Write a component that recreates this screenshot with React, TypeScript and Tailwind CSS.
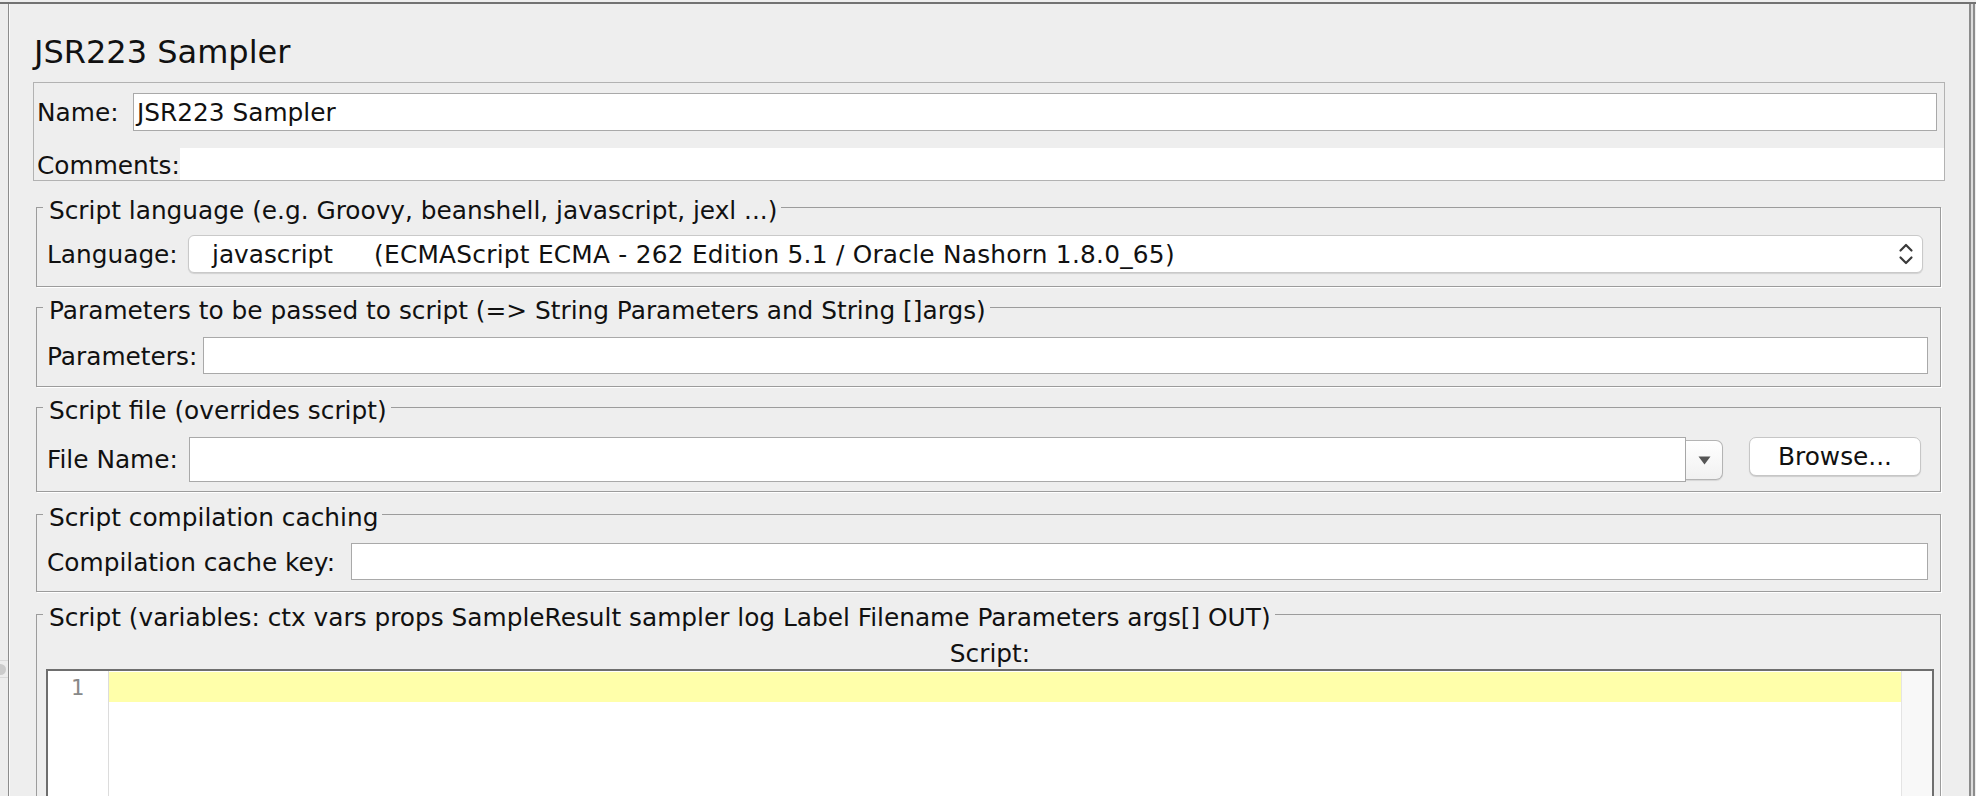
import React from "react";

function Legend({ children }: { children: React.ReactNode }) {
  return (
    <legend className="-ml-[4px] h-[36px] pt-[8px] pl-[6px] pr-[4px] text-[24.8px] leading-[28px] whitespace-pre overflow-hidden">
      {children}
    </legend>
  );
}

export default function App() {
  return (
    <div className="w-[1976px] h-[796px] overflow-hidden bg-[#eeeeee] pt-[2px] font-['DejaVu_Sans',sans-serif] text-[#111111]">
      <div className="flex h-full border-t-2 border-[#727272]">
        {/* left strip with splitter handle */}
        <div className="w-[8px] shrink-0 bg-[#ededed] flex flex-col">
          <div className="mt-[656px] h-[18px] border-y border-[#dadada] flex items-center">
            <div className="-ml-[5px] w-[11px] h-[11px] rounded-full bg-[#cbcbcb]" />
          </div>
        </div>

        {/* main panel */}
        <div className="flex-1 flex flex-col border-l border-r-2 border-[#8c8c8c] shadow-[inset_1px_0_0_#fafafa] pl-[24px] pr-[24px] pt-[28px]">
          <div className="h-[40px] leading-[40px] text-[32px] pl-[1px]">JSR223 Sampler</div>

          {/* Name / comments box */}
          <div className="mt-[10px] border border-[#b2b2b2] pt-[10px] text-[24.8px] leading-[28px]">
            <div className="flex items-center h-[38px] pl-[3px] pr-[7px]">
              <div className="w-[96px] shrink-0 pt-[2px]">Name:</div>
              <div className="flex-1 h-[38px] bg-white border border-[#a9a9a9] flex items-center px-[3px] pt-[2px]">
                JSR223 Sampler
              </div>
            </div>
            <div className="flex items-center h-[32px] mt-[17px] pl-[3px]">
              <div className="w-[143px] shrink-0 pt-[4px]">Comments:</div>
              <div className="flex-1 h-[32px] bg-white" />
            </div>
          </div>

          {/* Script language */}
          <fieldset className="mt-[8px] ml-[3px] mr-[4px] border border-[#9c9c9c] shadow-[1px_1px_0_#ffffff] pl-[10px] pr-[12px] pb-[13px] text-[24.8px] leading-[28px]">
            <Legend>Script language (e.g. Groovy, beanshell, javascript, jexl ...)</Legend>
            <div className="flex items-center mt-[10px] h-[38px]">
              <div className="w-[141px] shrink-0 pt-[2px]">Language:</div>
              <div className="flex-1 mr-[5px] h-[38px] rounded-[6px] bg-white border border-[#c9c9c9] shadow-[0_1px_1px_rgba(0,0,0,0.12)] flex items-center pl-[23px] pr-[8px]">
                <span className="pt-[2px]">javascript</span>
                <span className="ml-[41px] pt-[2px] tracking-[0.25px]">(ECMAScript ECMA - 262 Edition 5.1 / Oracle Nashorn 1.8.0_65)</span>
                <span className="flex-1" />
                <svg width="16" height="24" viewBox="0 0 16 24" className="shrink-0">
                  <path d="M2.5 8.5 L8 3 L13.5 8.5" fill="none" stroke="#3a3a3a" strokeWidth="2.2" strokeLinecap="round" strokeLinejoin="round" />
                  <path d="M2.5 15.5 L8 21 L13.5 15.5" fill="none" stroke="#3a3a3a" strokeWidth="2.2" strokeLinecap="round" strokeLinejoin="round" />
                </svg>
              </div>
            </div>
          </fieldset>

          {/* Parameters */}
          <fieldset className="mt-[2px] ml-[3px] mr-[4px] border border-[#9c9c9c] shadow-[1px_1px_0_#ffffff] pl-[10px] pr-[12px] pb-[12px] text-[24.8px] leading-[28px]">
            <Legend>Parameters to be passed to script (=&gt; String Parameters and String []args)</Legend>
            <div className="flex items-center mt-[12px] h-[37px]">
              <div className="w-[156px] shrink-0 pt-[3px]">Parameters:</div>
              <div className="flex-1 h-[37px] bg-white border border-[#a9a9a9]" />
            </div>
          </fieldset>

          {/* Script file */}
          <fieldset className="mt-[2px] ml-[3px] mr-[4px] border border-[#9c9c9c] shadow-[1px_1px_0_#ffffff] pl-[10px] pr-[12px] pb-[9px] text-[24.8px] leading-[28px]">
            <Legend>Script file (overrides script)</Legend>
            <div className="flex items-start mt-[12px] h-[45px]">
              <div className="w-[142px] shrink-0 h-[45px] flex items-center pt-[1px]">File Name:</div>
              <div className="flex-1 h-[45px] bg-white border border-[#a9a9a9]" />
              <div className="mt-[3px] w-[37px] h-[40px] shrink-0 rounded-r-[7px] border border-l-0 border-[#b4b4b4] bg-[linear-gradient(#ffffff,#f1f1f1)] shadow-[0_1px_1px_rgba(0,0,0,0.1)] flex items-center justify-center">
                <svg width="13" height="9" viewBox="0 0 13 9">
                  <path d="M0.5 0.5 L12.5 0.5 L6.5 8.5 Z" fill="#555555" />
                </svg>
              </div>
              <div className="ml-[26px] mr-[7px] w-[172px] h-[39px] shrink-0 rounded-[7px] bg-white border border-[#c6c6c6] shadow-[0_1px_1px_rgba(0,0,0,0.14)] flex items-center justify-center pt-[1px]">
                Browse...
              </div>
            </div>
          </fieldset>

          {/* Compilation caching */}
          <fieldset className="mt-[4px] ml-[3px] mr-[4px] border border-[#9c9c9c] shadow-[1px_1px_0_#ffffff] pl-[10px] pr-[12px] pb-[11px] text-[24.8px] leading-[28px]">
            <Legend>Script compilation caching</Legend>
            <div className="flex items-center mt-[11px] h-[37px]">
              <div className="w-[304px] shrink-0 pt-[3px]">Compilation cache key:</div>
              <div className="flex-1 h-[37px] bg-white border border-[#a9a9a9]" />
            </div>
          </fieldset>

          {/* Script */}
          <fieldset className="mt-[4px] ml-[3px] mr-[4px] border border-[#9c9c9c] shadow-[1px_1px_0_#ffffff] pl-[9px] pr-[6px] text-[24.8px] leading-[28px]">
            <legend className="-ml-[3px] h-[36px] pt-[8px] pl-[6px] pr-[4px] text-[24.8px] leading-[28px] whitespace-pre overflow-hidden">
              Script (variables: ctx vars props SampleResult sampler log Label Filename Parameters args[] OUT)
            </legend>
            <div className="pt-[8px] h-[36px] leading-[28px] text-center">Script:</div>
            <div className="mt-[1px] flex h-[220px] border-2 border-[#6e6e6e] bg-white">
              <div className="w-[61px] shrink-0 border-r border-[#dcdcdc] pt-[1px]">
                <div className="h-[30px] leading-[30px] text-right pr-[24px] pt-[1px] text-[22px] text-[#888888] font-['DejaVu_Sans_Mono',monospace]">
                  1
                </div>
              </div>
              <div className="flex-1 pt-[1px]">
                <div className="h-[30px] bg-[#ffffaa]" />
              </div>
              <div className="w-[31px] shrink-0 bg-[#f8f8f8] border-l border-[#e4e4e4]" />
            </div>
          </fieldset>
        </div>

        {/* right double border */}
        <div className="w-[2px] shrink-0 bg-[#dcdcdc]" />
        <div className="w-[2px] shrink-0 bg-[#8c8c8c]" />
        <div className="w-[1px] shrink-0 bg-[#eeeeee]" />
      </div>
    </div>
  );
}
